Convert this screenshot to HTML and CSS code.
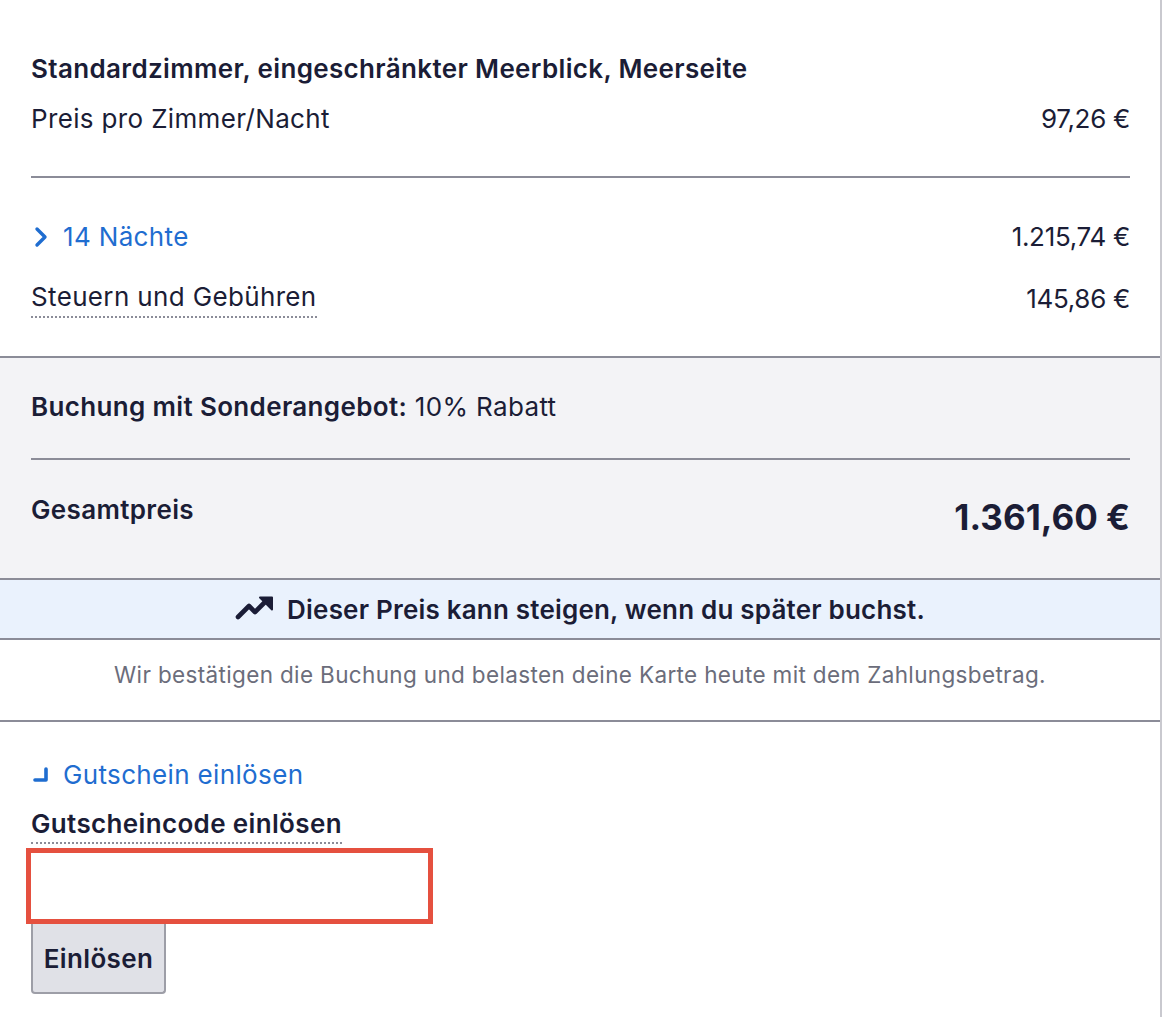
FILE: index.html
```html
<!DOCTYPE html>
<html lang="de">
<head>
<meta charset="utf-8">
<title>Preisdetails</title>
<link rel="stylesheet" href="styles.css">
</head>
<body>
<div class="panel">
  <section class="block top">
    <div class="room">Standardzimmer, eingeschränkter Meerblick, Meerseite</div>
    <div class="row r-price">
      <span>Preis pro Zimmer/Nacht</span>
      <span class="num">97,26 €</span>
    </div>
    <div class="rule"></div>
    <div class="row r-nights">
      <span class="link">
        <svg class="chev" width="16" height="22" viewBox="0 0 16 22"><path d="M4 3 L12 11 L4 19" fill="none" stroke="#1f6dd0" stroke-width="3.4" stroke-linecap="round" stroke-linejoin="round"/></svg>
        14 Nächte
      </span>
      <span class="num">1.215,74 €</span>
    </div>
    <div class="row r-tax">
      <span class="dotted">Steuern und Gebühren</span>
      <span class="num">145,86 €</span>
    </div>
  </section>
  <section class="block grey">
    <div class="offer"><b>Buchung mit Sonderangebot:</b> 10% Rabatt</div>
    <div class="rule"></div>
    <div class="row total">
      <span class="total-label">Gesamtpreis</span>
      <span class="total-value">1.361,60 €</span>
    </div>
  </section>
  <div class="notice">
    <svg width="40" height="26" viewBox="0 0 40 26"><path d="M3 22 L14 11 L20 17 L32 5" fill="none" stroke="#1b1d36" stroke-width="4.6" stroke-linecap="round" stroke-linejoin="round"/><path d="M25 2.5 L37 2.5 L37 14.5 Z" fill="#1b1d36" stroke="#1b1d36" stroke-width="2" stroke-linejoin="round"/></svg>
    <span>Dieser Preis kann steigen, wenn du später buchst.</span>
  </div>
  <div class="confirm">Wir bestätigen die Buchung und belasten deine Karte heute mit dem Zahlungsbetrag.</div>
  <section class="block coupon">
    <div class="link coupon-link">
      <svg class="corner" width="20" height="20" viewBox="0 0 20 20"><path d="M15 4 L15 15 L4 15" fill="none" stroke="#1f6dd0" stroke-width="3.6" stroke-linecap="round" stroke-linejoin="round"/></svg>
      Gutschein einlösen
    </div>
    <label class="code-label dotted" for="code">Gutscheincode einlösen</label>
    <input id="code" class="code-input" type="text">
    <button class="redeem" type="button">Einlösen</button>
  </section>
</div>
</body>
</html>
```

FILE: styles.css
```css
html, body {
  margin: 0;
  padding: 0;
  background: #ffffff;
}
body {
  font-family: Inter, "Noto Sans", sans-serif;
  color: #1b1d36;
  font-size: 26px;
  letter-spacing: 0.35px;
}
.panel {
  width: 1162px;
  border-right: 2px solid #c9c9cf;
  min-height: 1017px;
  box-sizing: border-box;
}
.block {
  padding: 0 30px 0 31px;
}
.top {
  padding-top: 52px;
  padding-bottom: 38px;
  border-bottom: 2px solid #8b8c98;
}
.room {
  font-weight: 600;
  line-height: 34px;
}
.row {
  display: flex;
  justify-content: space-between;
  align-items: center;
}
.num {
  letter-spacing: -0.3px;
}
.r-price {
  margin-top: 16px;
  line-height: 34px;
}
.rule {
  height: 2px;
  background: #8b8c98;
}
.top .rule {
  margin-top: 40px;
}
.r-nights {
  margin-top: 42px;
  line-height: 34px;
}
.r-tax {
  margin-top: 26px;
  line-height: 34px;
}
.link {
  color: #1f6dd0;
  display: flex;
  align-items: center;
}
.chev {
  margin-left: 2px;
  margin-right: 14px;
}
.dotted {
  border-bottom: 2px dotted #8b8c98;
  padding-bottom: 2px;
}
.grey {
  background: #f3f3f6;
  padding-top: 32px;
  padding-bottom: 34px;
}
.offer {
  line-height: 34px;
}
.offer b {
  font-weight: 600;
}
.grey .rule {
  margin-top: 34px;
}
.total {
  margin-top: 30px;
  align-items: flex-start;
}
.total-label {
  font-weight: 600;
  line-height: 40px;
}
.total-value {
  font-weight: 700;
  font-size: 35px;
  line-height: 54px;
  letter-spacing: 0;
}
.notice {
  border-top: 2px solid #8b8c98;
  border-bottom: 2px solid #8b8c98;
  background: #eaf2fd;
  height: 58px;
  display: flex;
  justify-content: center;
  align-items: center;
  gap: 12px;
  font-weight: 600;
  letter-spacing: 0.2px;
}
.notice svg {
  margin-top: -2px;
}
.confirm {
  text-align: center;
  color: #6b6d7b;
  font-size: 22.5px;
  height: 80px;
  line-height: 70px;
  border-bottom: 2px solid #8b8c98;
}
.coupon {
  padding-top: 36px;
  display: flex;
  flex-direction: column;
  align-items: flex-start;
}
.coupon-link {
  line-height: 34px;
}
.corner {
  margin-right: 12px;
  margin-left: 0;
}
.code-label {
  margin-top: 16px;
  font-weight: 600;
  line-height: 32px;
}
.code-input {
  margin: 4px 0 0 -5px;
  width: 407px;
  height: 76px;
  box-sizing: border-box;
  border: 5px solid #e5503f;
  border-radius: 0;
  outline: none;
  background: #fff;
  font-family: inherit;
  font-size: 26px;
  padding: 0 10px;
}
.redeem {
  width: 135px;
  height: 70px;
  box-sizing: border-box;
  background: #e0e1e7;
  border: 2px solid #9d9ea7;
  border-top: none;
  border-radius: 0 0 4px 4px;
  font-family: inherit;
  font-size: 26px;
  font-weight: 600;
  letter-spacing: 0.35px;
  color: #1b1d36;
  padding: 0;
}
```
